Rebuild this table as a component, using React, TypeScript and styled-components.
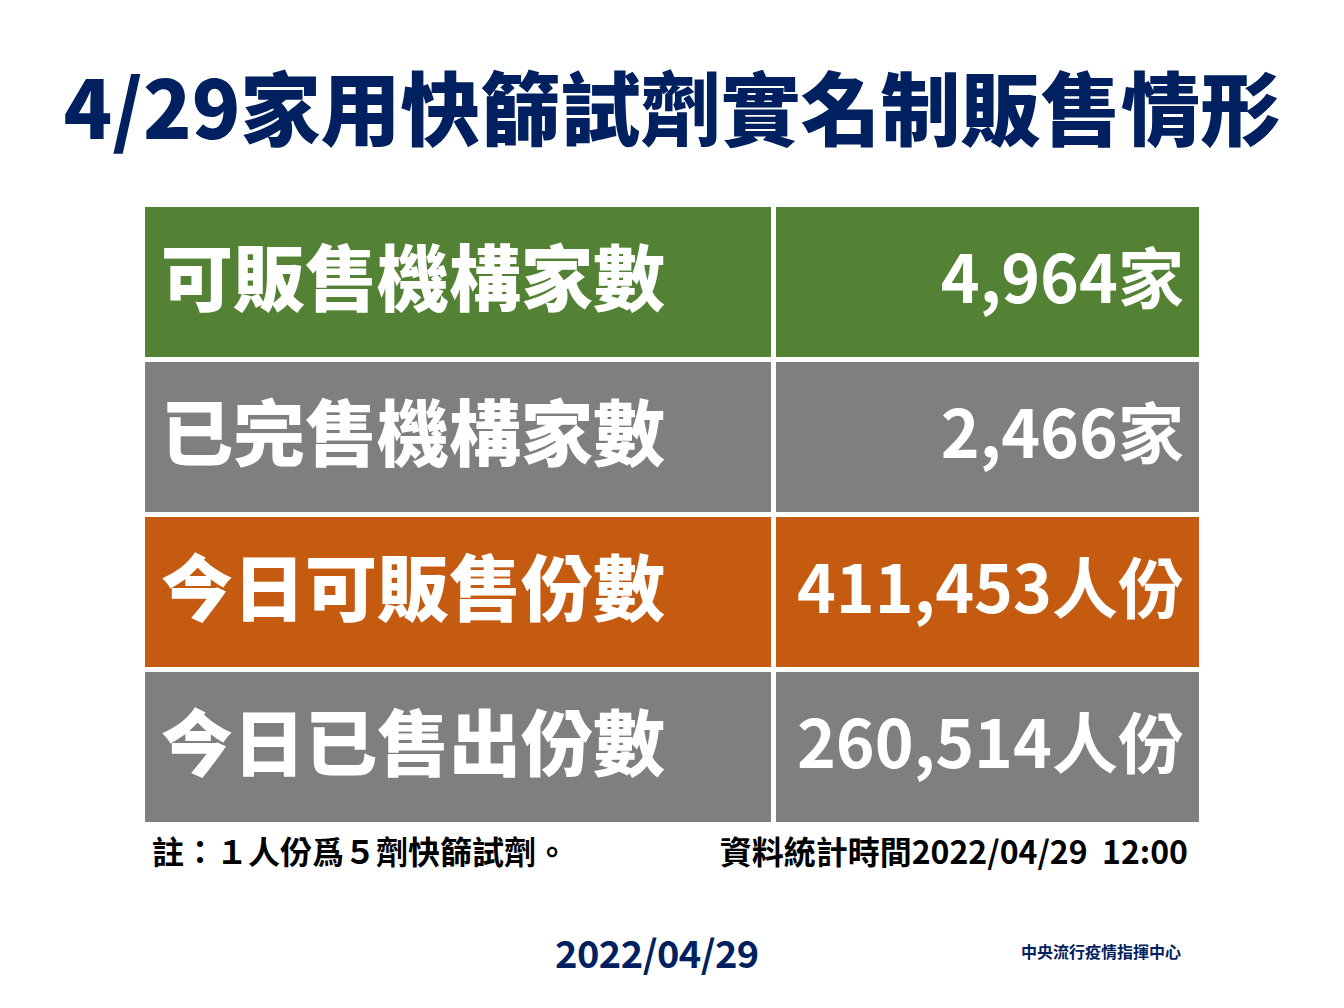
import styled, { createGlobalStyle } from "styled-components";

const GlobalStyle = createGlobalStyle`
  html, body {
    margin: 0;
    padding: 0;
    background: #ffffff;
  }
  body {
    font-family: "Noto Sans CJK TC", "Noto Sans", sans-serif;
  }
`;

const Page = styled.div`
  width: 1344px;
  height: 1008px;
  display: flex;
  flex-direction: column;
  align-items: center;
  background: #ffffff;
  overflow: hidden;
`;

const Title = styled.h1`
  margin: 54px 0 53px 0;
  height: 100px;
  line-height: 100px;
  font-size: 80px;
  font-weight: 900;
  color: #002060;
  white-space: nowrap;
`;

const Table = styled.div`
  display: grid;
  grid-template-columns: 626px 423px;
  grid-auto-rows: 150px;
  gap: 5px;
  width: 1054px;
`;

const Cell = styled.div<{ $bg: string; $align?: "left" | "right" }>`
  display: flex;
  align-items: center;
  justify-content: ${(p) => (p.$align === "right" ? "flex-end" : "flex-start")};
  padding: ${(p) => (p.$align === "right" ? "0 15px 16px 0" : "0 0 16px 16px")};
  background: ${(p) => p.$bg};
  color: #ffffff;
  white-space: nowrap;
`;

const Label = styled.span`
  font-size: 72px;
  font-weight: 900;
  line-height: 1;
`;

const Value = styled.span`
  font-size: 66px;
  font-weight: 700;
  line-height: 1;
`;

const NoteRow = styled.div`
  width: 1054px;
  margin-top: 8px;
  padding: 0 11px 0 7px;
  box-sizing: border-box;
  display: flex;
  justify-content: space-between;
  align-items: center;
  height: 40px;
`;

const Note = styled.span`
  font-size: 32px;
  font-weight: 700;
  color: #000000;
  white-space: pre;
`;

const BottomRow = styled.div`
  width: 1054px;
  margin-top: 56px;
  display: flex;
  align-items: center;
  height: 50px;
`;

const DateStamp = styled.span`
  margin-left: 410px;
  font-size: 38px;
  font-weight: 700;
  letter-spacing: -0.5px;
  color: #002060;
`;

const Agency = styled.span`
  margin-left: auto;
  margin-right: 18px;
  font-size: 16px;
  font-weight: 700;
  color: #002060;
`;

const rows = [
  { label: "可販售機構家數", value: "4,964家", bg: "#548235" },
  { label: "已完售機構家數", value: "2,466家", bg: "#7f7f7f" },
  { label: "今日可販售份數", value: "411,453人份", bg: "#c55a11" },
  { label: "今日已售出份數", value: "260,514人份", bg: "#7f7f7f" },
];

export default function App() {
  return (
    <>
      <GlobalStyle />
      <Page>
        <Title>4/29家用快篩試劑實名制販售情形</Title>
        <Table>
          {rows.map((r) => [
            <Cell key={r.label} $bg={r.bg}>
              <Label>{r.label}</Label>
            </Cell>,
            <Cell key={r.value} $bg={r.bg} $align="right">
              <Value>{r.value}</Value>
            </Cell>,
          ])}
        </Table>
        <NoteRow>
          <Note>註：１人份爲５劑快篩試劑。</Note>
          <Note>資料統計時間2022/04/29  12:00</Note>
        </NoteRow>
        <BottomRow>
          <DateStamp>2022/04/29</DateStamp>
          <Agency>中央流行疫情指揮中心</Agency>
        </BottomRow>
      </Page>
    </>
  );
}
